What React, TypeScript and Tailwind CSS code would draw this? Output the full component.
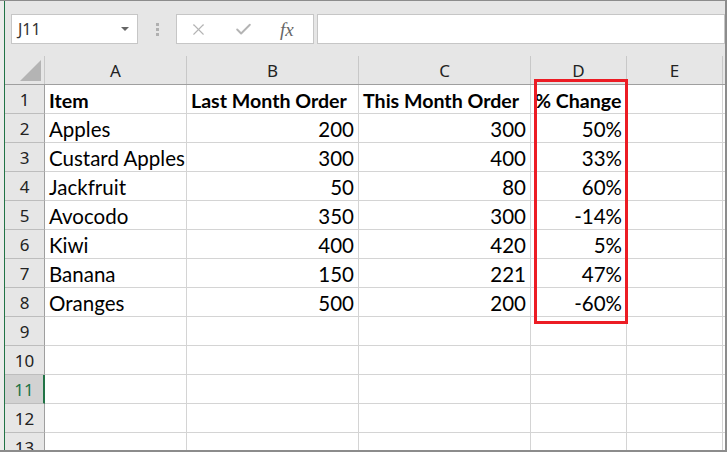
import { X, Check } from "lucide-react";

const cols = ["A", "B", "C", "D", "E"];
const widths = ["w-[142px]", "w-[172px]", "w-[172px]", "w-[96px]", "w-[96px]"];

type Cell = { v: string; right?: boolean; bold?: boolean };

const data: Cell[][] = [
    [{ v: "Item", bold: true }, { v: "Last Month Order", bold: true }, { v: "This Month Order", bold: true }, { v: "% Change", bold: true }],
    [{ v: "Apples" }, { v: "200", right: true }, { v: "300", right: true }, { v: "50%", right: true }],
    [{ v: "Custard Apples" }, { v: "300", right: true }, { v: "400", right: true }, { v: "33%", right: true }],
    [{ v: "Jackfruit" }, { v: "50", right: true }, { v: "80", right: true }, { v: "60%", right: true }],
    [{ v: "Avocodo" }, { v: "350", right: true }, { v: "300", right: true }, { v: "-14%", right: true }],
    [{ v: "Kiwi" }, { v: "400", right: true }, { v: "420", right: true }, { v: "5%", right: true }],
    [{ v: "Banana" }, { v: "150", right: true }, { v: "221", right: true }, { v: "47%", right: true }],
    [{ v: "Oranges" }, { v: "500", right: true }, { v: "200", right: true }, { v: "-60%", right: true }],
    [], [], [], [], [],
];

function Toolbar() {
    return (
        <div className="h-[55px] shrink-0 flex pt-[13px] pl-[6px]">
            <div className="w-[127px] h-[30px] bg-white border border-[#c6c6c6] flex items-center justify-between pl-[6px] pr-[8px]">
                <span className="text-[16px] text-[#333]" style={{ fontFamily: "'Noto Sans', sans-serif" }}>J11</span>
                <span className="w-0 h-0 border-l-[4px] border-r-[4px] border-t-[4px] border-l-transparent border-r-transparent border-t-[#666]" />
            </div>
            <div className="w-[38px] h-[30px] flex flex-col items-center justify-center gap-[2px] pl-px">
                <span className="w-[3px] h-[3px] bg-[#b0b0b0]" />
                <span className="w-[3px] h-[3px] bg-[#b0b0b0]" />
                <span className="w-[3px] h-[3px] bg-[#b0b0b0]" />
            </div>
            <div className="w-[138px] h-[30px] bg-white border border-[#c6c6c6] flex items-center pl-[12px]">
                <X size={19} strokeWidth={1.4} className="text-[#b4b4b4]" />
                <Check size={19} strokeWidth={2.4} className="text-[#b4b4b4] ml-[26px]" />
                <span className="ml-[27px] text-[19px] italic text-[#666] leading-none" style={{ fontFamily: "'Liberation Serif', serif" }}>fx</span>
            </div>
            <div className="flex-1 h-[30px] bg-white border border-[#c6c6c6] ml-[3px]" />
        </div>
    );
}

export default function App() {
    const cellFont = { fontFamily: "Lato, 'Liberation Sans', sans-serif" };
    const headFont = { fontFamily: "'Noto Sans', sans-serif" };
    return (
        <div className="w-[727px] h-[452px] bg-[#e6e6e6] border-t border-r-2 border-b-2 border-[#8c8c8c] flex overflow-hidden">
            <div className="w-[4px] shrink-0 bg-[#ececec]" />
            <div className="w-px shrink-0 bg-[#217346]" />
            <div className="flex-1 flex flex-col min-w-0">
                <Toolbar />
                <div className="relative flex-1 bg-white overflow-hidden">
                    {/* column headers */}
                    <div className="flex h-[29px] bg-[#e6e6e6] border-b border-[#9f9f9f]">
                        <div className="w-[40px] shrink-0 border-r border-[#c8c8c8] relative">
                            <div className="absolute left-[15px] top-[4px] w-0 h-0 border-l-[21px] border-b-[21px] border-l-transparent border-b-[#b4b4b4]" />
                        </div>
                        {cols.map((c, i) => (
                            <div key={c} className={`${widths[i]} shrink-0 border-r border-[#c8c8c8] flex items-center justify-center text-[17px] text-[#222] pt-px`} style={headFont}>
                                {c}
                            </div>
                        ))}
                        <div className="flex-1" />
                    </div>
                    {data.map((row, r) => {
                        const sel = r + 1 === 11;
                        return (
                            <div key={r} className="flex h-[29px] border-b border-[#d4d4d4]">
                                <div
                                    className={`w-[40px] shrink-0 flex items-center justify-center text-[17px] pt-[2px] border-r border-[#9f9f9f] border-b border-b-[#bdbdbd] -mb-px ${sel ? "bg-[#d2d2d2] text-[#217346] border-r-2 border-r-[#217346]" : "bg-[#e6e6e6] text-[#222]"}`}
                                    style={headFont}
                                >
                                    {r + 1}
                                </div>
                                {cols.map((c, i) => {
                                    const cell = row[i];
                                    return (
                                        <div
                                            key={c}
                                            className={`${widths[i]} shrink-0 border-r border-[#d4d4d4] flex items-center px-[4px] pt-[3px] text-black whitespace-nowrap ${cell?.right ? "justify-end" : "justify-start"} ${cell?.bold ? "font-bold text-[19.6px]" : "text-[20.5px]"}`}
                                            style={cellFont}
                                        >
                                            {cell?.v}
                                        </div>
                                    );
                                })}
                                <div className="flex-1" />
                            </div>
                        );
                    })}
                    <div className="absolute left-[529px] top-[23px] w-[94px] h-[245px] border-[3px] border-[#ec1c24]" />
                </div>
            </div>
        </div>
    );
}
